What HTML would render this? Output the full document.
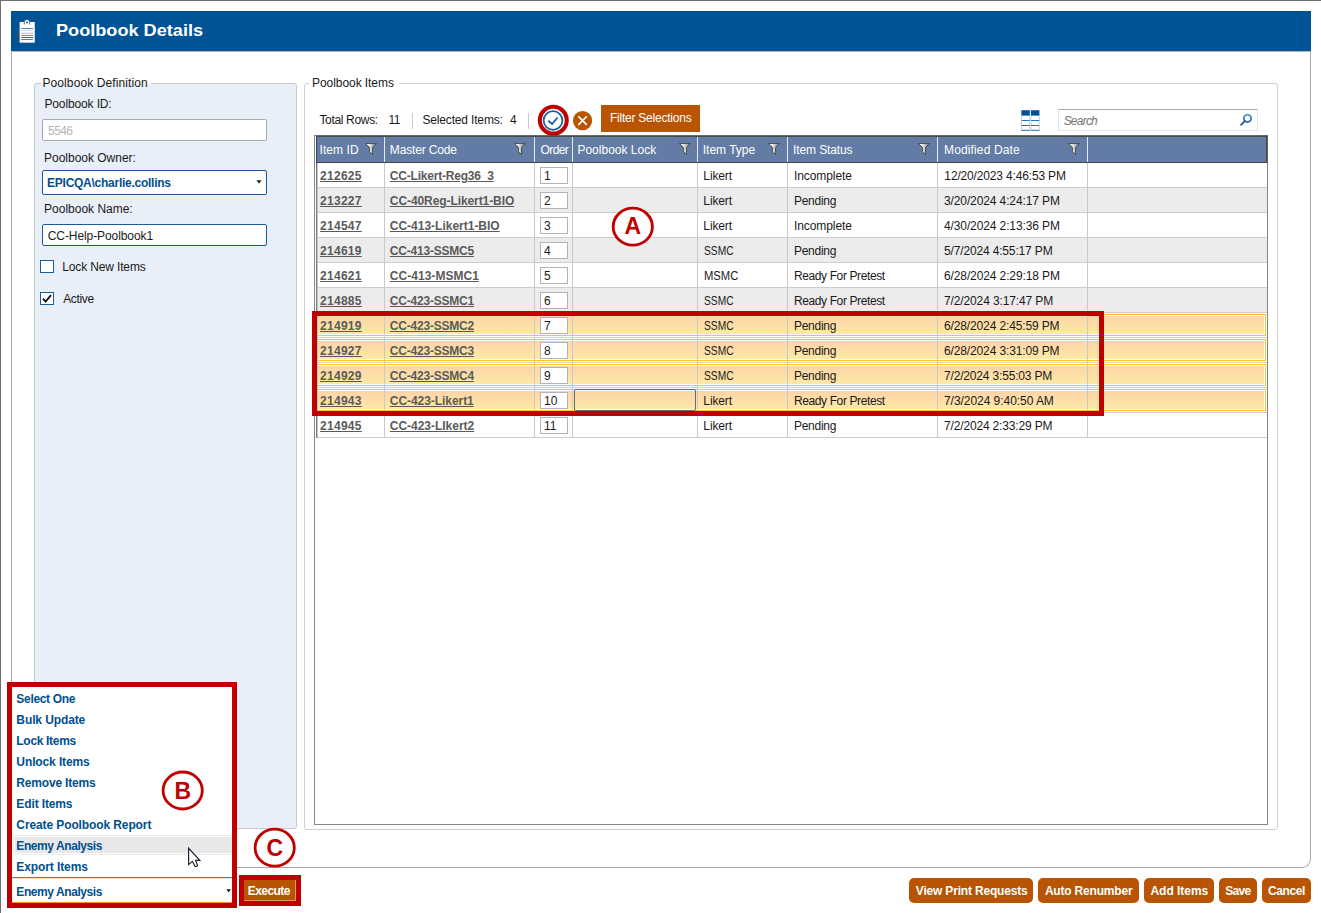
<!DOCTYPE html><html><head><meta charset="utf-8"><title>Poolbook Details</title><style>
*{box-sizing:border-box;margin:0;padding:0}
html,body{width:1321px;height:913px;overflow:hidden;background:#fff}
body{position:relative;font-family:"Liberation Sans",sans-serif;font-size:12px;color:#1a1a1a;line-height:14px}
.a{position:absolute}
.t{position:absolute;white-space:nowrap;line-height:14px;height:14px}
.b{font-weight:bold}
.hdr{position:absolute;left:11px;top:11px;width:1300px;height:40px;background:#005496}
.title{position:absolute;color:#fff;font-weight:bold;font-size:16.5px;line-height:22px;white-space:nowrap}
.panel{position:absolute;left:11px;top:51px;width:1300px;height:817px;border:1px solid #a8a8a8;border-top:none;border-radius:0 0 9px 9px}
.gb1{position:absolute;left:34px;top:83px;width:263px;height:746px;border:1px solid #c9c9c9;border-radius:3px;background:#e9eff8}
.gb2{position:absolute;left:304px;top:83px;width:974px;height:747px;border:1px solid #d0d0d0;border-radius:3px;background:#fff}
.lg{position:absolute;height:1px;top:83px}
.inp{position:absolute;background:#fff;border:1px solid #1b5a9e;border-radius:2px}
.grid{position:absolute;left:314px;top:135px;width:954px;height:690px;border:1px solid #868686;background:#fff}
.gh{position:absolute;left:316px;top:136px;width:951px;height:27px;background:#627ca5;border-top:1px solid #4a4a4a;border-bottom:1px solid #444;border-left:1px solid #3c4656;border-right:1px solid #4a4a4a}
.ht{position:absolute;color:#fff;white-space:nowrap;line-height:14px}
.hs{position:absolute;top:137px;width:1px;height:25px;background:#e6e9f2}
.row{position:absolute;left:316px;width:951px;height:25px;border-bottom:1px solid #cdcdcd}
.row.alt{background:#ececec}
.row.selrow{border-bottom-color:#cfcfd9}
.sel{position:absolute;left:-2px;right:1px;top:1px;height:22px;border:1px solid #ffc423;background:#fff}
.sel i{position:absolute;left:1px;right:1px;top:1px;bottom:1px;background:linear-gradient(#fed4a8,#fde9a6)}
.cs{position:absolute;width:1px;background:#c9c9c9}
.lk{position:absolute;white-space:nowrap;font-weight:bold;color:#5a5a5a;text-decoration:underline;line-height:14px}
.c{position:absolute;white-space:nowrap;line-height:14px;color:#1a1a1a}
.oi{position:absolute;left:540px;width:28px;height:17px;background:#fff;border:1px solid #aeb3bd}
.red{position:absolute;border:5px solid #c00000}
.dd{position:absolute;left:12px;top:687px;width:220px;height:191px;background:#fff}
.di{position:absolute;white-space:nowrap;font-weight:bold;color:#004f8f;line-height:14px}
.btn{position:absolute;top:878px;height:25px;background:#b85402;border-radius:5px}
.bt{position:absolute;color:#fff;font-weight:bold;white-space:nowrap;line-height:14px}
</style></head><body>
<div class="a" style="left:0;top:0;width:1321px;height:1px;background:#707070"></div>
<div class="a" style="left:0;top:0;width:1px;height:913px;background:#707070"></div>
<div class="panel"></div>
<div class="hdr"></div>
<div class="a" style="left:11px;top:51px;width:1300px;height:1px;background:#b4b4b4"></div>
<svg class="a" style="left:18px;top:18px" width="20" height="27" viewBox="18 18 20 27">
<rect x="19.3" y="21.8" width="15.8" height="21.3" fill="#6a7f9c" opacity="0.55"/>
<rect x="19.7" y="22" width="15" height="20.6" fill="#fff"/>
<path d="M24.3 24.6V22.2a2.7 2.7 0 0 1 5.4 0V24.6" fill="#fff" stroke="#3f5677" stroke-width="0.9"/>
<path d="M26 24.3V22.6a1 1 0 0 1 2 0V24.3" fill="#005496" stroke="none"/>
<rect x="24.8" y="23.2" width="4.4" height="1.8" fill="#fff"/>
<g stroke-width="1">
<path d="M21.2 28.5h11.8" stroke="#4a82b4"/><path d="M21.2 30.5h11.8" stroke="#c8d8e8"/>
<path d="M21.2 33.2h11.8" stroke="#a9c3da"/><path d="M21.2 35.4h11.8" stroke="#5c8fbd"/>
<path d="M21.2 37.5h11.8" stroke="#2e6da6"/><path d="M21.2 39.5h11.8" stroke="#4a82b4"/></g>
</svg>
<div id="title" class="title" style="left:55.82px;top:19.2px;transform:scaleX(1.0986);transform-origin:0 0;">Poolbook Details</div>
<div class="gb1"></div><div class="gb2"></div>
<div class="lg" style="left:41px;width:110px;background:#f4f7fb"></div>
<div class="lg" style="left:309px;width:90px;background:#fff"></div>
<div id="PoolDef" class="t" style="left:42.45px;top:76px;letter-spacing:0.1px;">Poolbook Definition</div>
<div id="PoolItems" class="t" style="left:312.09px;top:76px;letter-spacing:-0.069px;">Poolbook Items</div>
<div id="PoolID" class="t" style="left:44.45px;top:97px;letter-spacing:-0.131px;">Poolbook ID:</div>
<div class="inp" style="left:42px;top:119px;width:225px;height:22px;border-color:#a9a9a9"></div>
<div id="5546" class="t" style="left:48.09px;top:124px;letter-spacing:-0.6px;color:#b4b4b4">5546</div>
<div id="Owner" class="t" style="left:44.09px;top:151px;letter-spacing:-0.019px;">Poolbook Owner:</div>
<div class="inp" style="left:42px;top:170px;width:225px;height:25px"></div>
<div id="EPICQA" class="t b" style="left:47.09px;top:176px;letter-spacing:-0.261px;color:#004f8f">EPICQA\charlie.collins</div>
<svg class="a" style="left:256px;top:180px" width="6" height="4"><path d="M0.3 0.3h5.4L3 3.6z" fill="#222"/></svg>
<div id="Name" class="t" style="left:44.09px;top:202px;letter-spacing:-0.007px;">Poolbook Name:</div>
<div class="inp" style="left:42px;top:224px;width:225px;height:22px"></div>
<div id="CCHelp" class="t" style="left:47.81px;top:229px;letter-spacing:-0.09px;">CC-Help-Poolbook1</div>
<div class="a" style="left:40px;top:260px;width:14px;height:13px;background:#fff;border:1px solid #1b5a9e"></div>
<div id="LockNew" class="t" style="left:62.27px;top:260px;letter-spacing:-0.145px;">Lock New Items</div>
<div class="a" style="left:40px;top:292px;width:14px;height:13px;background:#fff;border:1px solid #1b5a9e"></div>
<svg class="a" style="left:40px;top:292px" width="14" height="13"><path d="M3 6.6L5.6 9.6L11 3.2" fill="none" stroke="#111" stroke-width="1.9"/></svg>
<div id="Active" class="t" style="left:63.17px;top:292px;letter-spacing:-0.342px;">Active</div>
<div id="TotalRows" class="t" style="left:319.45px;top:113px;letter-spacing:-0.333px;">Total Rows:</div>
<div id="n11" class="t" style="left:388.4px;top:113px;letter-spacing:-0.35px;">11</div>
<div class="a" style="left:412px;top:113px;width:1px;height:16px;background:#c8c8d8"></div>
<div id="SelItems" class="t" style="left:422.45px;top:113px;letter-spacing:-0.161px;">Selected Items:</div>
<div id="n4" class="t" style="left:510.0px;top:113px;letter-spacing:-0.9px;">4</div>
<div class="a" style="left:528px;top:113px;width:1px;height:16px;background:#c8c8d8"></div>
<svg class="a" style="left:536px;top:103px;z-index:5" width="60" height="34" viewBox="536 103 60 34">
<circle cx="553" cy="120.45" r="9.35" fill="#fff" stroke="#1560a4" stroke-width="1.8"/>
<path d="M548.3 120.8l3.8 3.2l5.5-6.5" fill="none" stroke="#1560a4" stroke-width="1.9"/>
<circle cx="553.3" cy="120.2" r="13.45" fill="none" stroke="#c00000" stroke-width="4.1"/>
<circle cx="582.55" cy="120.65" r="9.6" fill="#b85402"/>
<path d="M578.3 116.4l8.5 8.5M586.8 116.4l-8.5 8.5" stroke="#fff" stroke-width="1.6"/>
</svg>
<div class="a" style="left:601px;top:105px;width:99px;height:26.7px;background:#b85402"></div>
<div id="Filter" class="t" style="left:609.9px;top:111px;letter-spacing:-0.225px;color:#fff">Filter Selections</div>
<svg class="a" style="left:1021px;top:110px" width="19" height="21" viewBox="0 0 19 21">
<rect x="0.5" y="0.5" width="8.3" height="20" fill="#fff" stroke="#c5d9ec" stroke-width="1"/>
<rect x="10" y="0.5" width="8.3" height="20" fill="#fff" stroke="#c5d9ec" stroke-width="1"/>
<rect x="0.5" y="0.3" width="8.3" height="5.3" fill="#00529b"/>
<rect x="10" y="0.3" width="8.3" height="5.3" fill="#00529b"/>
<path d="M0.5 10.5h8.3M10 10.5h8.3M0.5 15.5h8.3M10 15.5h8.3M0.5 20.3h8.3M10 20.3h8.3" stroke="#2e74b5" stroke-width="1"/>
</svg>
<div class="a" style="left:1058px;top:109px;width:200px;height:22px;background:#fff;border:1px solid #dfe5ee;border-top-color:#a9a9b0"></div>
<div id="Search" class="t" style="left:1063.63px;top:114px;letter-spacing:-0.774px;font-style:italic;color:#747474">Search</div>
<svg class="a" style="left:1238px;top:112px" width="16" height="16" viewBox="0 0 16 16">
<defs><linearGradient id="mg" x1="0" x2="0" y1="0" y2="1"><stop offset="0" stop-color="#58a6d8"/><stop offset="1" stop-color="#3b62b4"/></linearGradient></defs>
<circle cx="9.5" cy="6.3" r="3.65" fill="none" stroke="url(#mg)" stroke-width="2"/>
<path d="M6.7 9.2L3.1 12.8" stroke="#2d569e" stroke-width="1.9" stroke-linecap="round"/></svg>
<div class="grid"></div>
<div class="gh"></div>
<div class="a" style="left:316px;top:135px;width:952px;height:1px;background:#6a6a6a"></div>
<div class="a" style="left:1267px;top:135px;width:1px;height:28px;background:#5e5e5e"></div>
<div class="hs" style="left:384px"></div>
<div class="hs" style="left:534px"></div>
<div class="hs" style="left:572px"></div>
<div class="hs" style="left:697px"></div>
<div class="hs" style="left:787px"></div>
<div class="hs" style="left:937px"></div>
<div class="hs" style="left:1087px"></div>
<div id="hItemID" class="ht" style="left:319.55px;top:143px;letter-spacing:0.075px;">Item ID</div>
<div id="hMaster" class="ht" style="left:389.82px;top:143px;letter-spacing:-0.162px;">Master Code</div>
<div id="hOrder" class="ht" style="left:540.45px;top:143px;letter-spacing:-0.562px;">Order</div>
<div id="hLock" class="ht" style="left:577.45px;top:143px;">Poolbook Lock</div>
<div id="hType" class="ht" style="left:702.74px;top:143px;letter-spacing:-0.011px;">Item Type</div>
<div id="hStatus" class="ht" style="left:793.1px;top:143px;letter-spacing:-0.126px;">Item Status</div>
<div id="hDate" class="ht" style="left:944.0px;top:143px;letter-spacing:0.143px;">Modified Date</div>
<svg class="a" style="left:365px;top:143px" width="13" height="13" viewBox="0 0 13 13">
<defs><linearGradient id="fg0" x1="0" x2="1" y1="0" y2="0"><stop offset="0.15" stop-color="#fff"/><stop offset="0.5" stop-color="#d4d4d4"/><stop offset="0.85" stop-color="#888"/></linearGradient></defs>
<path d="M0.4 0.45H11.5L7.6 4.3V11.6L4.4 8.6V4.3Z" fill="url(#fg0)" stroke="#4f4f4f" stroke-width="1" stroke-linejoin="round"/></svg>
<svg class="a" style="left:514px;top:143px" width="13" height="13" viewBox="0 0 13 13">
<defs><linearGradient id="fg1" x1="0" x2="1" y1="0" y2="0"><stop offset="0.15" stop-color="#fff"/><stop offset="0.5" stop-color="#d4d4d4"/><stop offset="0.85" stop-color="#888"/></linearGradient></defs>
<path d="M0.4 0.45H11.5L7.6 4.3V11.6L4.4 8.6V4.3Z" fill="url(#fg1)" stroke="#4f4f4f" stroke-width="1" stroke-linejoin="round"/></svg>
<svg class="a" style="left:679px;top:143px" width="13" height="13" viewBox="0 0 13 13">
<defs><linearGradient id="fg2" x1="0" x2="1" y1="0" y2="0"><stop offset="0.15" stop-color="#fff"/><stop offset="0.5" stop-color="#d4d4d4"/><stop offset="0.85" stop-color="#888"/></linearGradient></defs>
<path d="M0.4 0.45H11.5L7.6 4.3V11.6L4.4 8.6V4.3Z" fill="url(#fg2)" stroke="#4f4f4f" stroke-width="1" stroke-linejoin="round"/></svg>
<svg class="a" style="left:768px;top:143px" width="13" height="13" viewBox="0 0 13 13">
<defs><linearGradient id="fg3" x1="0" x2="1" y1="0" y2="0"><stop offset="0.15" stop-color="#fff"/><stop offset="0.5" stop-color="#d4d4d4"/><stop offset="0.85" stop-color="#888"/></linearGradient></defs>
<path d="M0.4 0.45H11.5L7.6 4.3V11.6L4.4 8.6V4.3Z" fill="url(#fg3)" stroke="#4f4f4f" stroke-width="1" stroke-linejoin="round"/></svg>
<svg class="a" style="left:918px;top:143px" width="13" height="13" viewBox="0 0 13 13">
<defs><linearGradient id="fg4" x1="0" x2="1" y1="0" y2="0"><stop offset="0.15" stop-color="#fff"/><stop offset="0.5" stop-color="#d4d4d4"/><stop offset="0.85" stop-color="#888"/></linearGradient></defs>
<path d="M0.4 0.45H11.5L7.6 4.3V11.6L4.4 8.6V4.3Z" fill="url(#fg4)" stroke="#4f4f4f" stroke-width="1" stroke-linejoin="round"/></svg>
<svg class="a" style="left:1068px;top:143px" width="13" height="13" viewBox="0 0 13 13">
<defs><linearGradient id="fg5" x1="0" x2="1" y1="0" y2="0"><stop offset="0.15" stop-color="#fff"/><stop offset="0.5" stop-color="#d4d4d4"/><stop offset="0.85" stop-color="#888"/></linearGradient></defs>
<path d="M0.4 0.45H11.5L7.6 4.3V11.6L4.4 8.6V4.3Z" fill="url(#fg5)" stroke="#4f4f4f" stroke-width="1" stroke-linejoin="round"/></svg>
<div class="row" style="top:163px">
</div>
<div class="cs" style="left:384px;top:163px;height:24px"></div>
<div class="cs" style="left:534px;top:163px;height:24px"></div>
<div class="cs" style="left:572px;top:163px;height:24px"></div>
<div class="cs" style="left:697px;top:163px;height:24px"></div>
<div class="cs" style="left:787px;top:163px;height:24px"></div>
<div class="cs" style="left:937px;top:163px;height:24px"></div>
<div class="cs" style="left:1087px;top:163px;height:24px"></div>
<div id="id0" class="lk" style="left:320.0px;top:169px;letter-spacing:0.292px;">212625</div>
<div id="code0" class="lk" style="left:389.81px;top:169px;letter-spacing:-0.204px;">CC-Likert-Reg36_3</div>
<div class="oi" style="top:167px"></div>
<div id="ord0" class="c" style="left:544px;top:169px;">1</div>
<div id="type0" class="c" style="left:703.37px;top:169px;letter-spacing:-0.126px;">Likert</div>
<div id="stat0" class="c" style="left:793.91px;top:169px;letter-spacing:-0.07px;">Incomplete</div>
<div id="date0" class="c" style="left:944.36px;top:169px;letter-spacing:-0.158px;">12/20/2023 4:46:53 PM</div>
<div class="row alt" style="top:188px">
</div>
<div class="cs" style="left:384px;top:188px;height:24px"></div>
<div class="cs" style="left:534px;top:188px;height:24px"></div>
<div class="cs" style="left:572px;top:188px;height:24px"></div>
<div class="cs" style="left:697px;top:188px;height:24px"></div>
<div class="cs" style="left:787px;top:188px;height:24px"></div>
<div class="cs" style="left:937px;top:188px;height:24px"></div>
<div class="cs" style="left:1087px;top:188px;height:24px"></div>
<div id="id1" class="lk" style="left:320.0px;top:194px;letter-spacing:0.292px;">213227</div>
<div id="code1" class="lk" style="left:389.81px;top:194px;letter-spacing:-0.081px;">CC-40Reg-Likert1-BIO</div>
<div class="oi" style="top:192px"></div>
<div id="ord1" class="c" style="left:544px;top:194px;">2</div>
<div id="type1" class="c" style="left:703.37px;top:194px;letter-spacing:-0.126px;">Likert</div>
<div id="stat1" class="c" style="left:793.91px;top:194px;letter-spacing:-0.255px;">Pending</div>
<div id="date1" class="c" style="left:944.0px;top:194px;letter-spacing:-0.114px;">3/20/2024 4:24:17 PM</div>
<div class="row" style="top:213px">
</div>
<div class="cs" style="left:384px;top:213px;height:24px"></div>
<div class="cs" style="left:534px;top:213px;height:24px"></div>
<div class="cs" style="left:572px;top:213px;height:24px"></div>
<div class="cs" style="left:697px;top:213px;height:24px"></div>
<div class="cs" style="left:787px;top:213px;height:24px"></div>
<div class="cs" style="left:937px;top:213px;height:24px"></div>
<div class="cs" style="left:1087px;top:213px;height:24px"></div>
<div id="id2" class="lk" style="left:320.0px;top:219px;letter-spacing:0.292px;">214547</div>
<div id="code2" class="lk" style="left:389.81px;top:219px;letter-spacing:-0.008px;">CC-413-Likert1-BIO</div>
<div class="oi" style="top:217px"></div>
<div id="ord2" class="c" style="left:544px;top:219px;">3</div>
<div id="type2" class="c" style="left:703.37px;top:219px;letter-spacing:-0.126px;">Likert</div>
<div id="stat2" class="c" style="left:793.91px;top:219px;letter-spacing:-0.07px;">Incomplete</div>
<div id="date2" class="c" style="left:944.0px;top:219px;letter-spacing:-0.114px;">4/30/2024 2:13:36 PM</div>
<div class="row alt" style="top:238px">
</div>
<div class="cs" style="left:384px;top:238px;height:24px"></div>
<div class="cs" style="left:534px;top:238px;height:24px"></div>
<div class="cs" style="left:572px;top:238px;height:24px"></div>
<div class="cs" style="left:697px;top:238px;height:24px"></div>
<div class="cs" style="left:787px;top:238px;height:24px"></div>
<div class="cs" style="left:937px;top:238px;height:24px"></div>
<div class="cs" style="left:1087px;top:238px;height:24px"></div>
<div id="id3" class="lk" style="left:320.0px;top:244px;letter-spacing:0.292px;">214619</div>
<div id="code3" class="lk" style="left:389.81px;top:244px;letter-spacing:-0.208px;">CC-413-SSMC5</div>
<div class="oi" style="top:242px"></div>
<div id="ord3" class="c" style="left:544px;top:244px;">4</div>
<div id="type3" class="c" style="left:704.27px;top:244px;transform:scaleX(0.8517);transform-origin:0 0;">SSMC</div>
<div id="stat3" class="c" style="left:793.91px;top:244px;letter-spacing:-0.255px;">Pending</div>
<div id="date3" class="c" style="left:944.0px;top:244px;letter-spacing:-0.155px;">5/7/2024 4:55:17 PM</div>
<div class="row" style="top:263px">
</div>
<div class="cs" style="left:384px;top:263px;height:24px"></div>
<div class="cs" style="left:534px;top:263px;height:24px"></div>
<div class="cs" style="left:572px;top:263px;height:24px"></div>
<div class="cs" style="left:697px;top:263px;height:24px"></div>
<div class="cs" style="left:787px;top:263px;height:24px"></div>
<div class="cs" style="left:937px;top:263px;height:24px"></div>
<div class="cs" style="left:1087px;top:263px;height:24px"></div>
<div id="id4" class="lk" style="left:320.0px;top:269px;letter-spacing:0.292px;">214621</div>
<div id="code4" class="lk" style="left:389.81px;top:269px;letter-spacing:0.035px;">CC-413-MSMC1</div>
<div class="oi" style="top:267px"></div>
<div id="ord4" class="c" style="left:544px;top:269px;">5</div>
<div id="type4" class="c" style="left:704.27px;top:269px;transform:scaleX(0.9352);transform-origin:0 0;">MSMC</div>
<div id="stat4" class="c" style="left:793.91px;top:269px;letter-spacing:-0.382px;">Ready For Pretest</div>
<div id="date4" class="c" style="left:944.0px;top:269px;letter-spacing:-0.114px;">6/28/2024 2:29:18 PM</div>
<div class="row alt" style="top:288px">
</div>
<div class="cs" style="left:384px;top:288px;height:24px"></div>
<div class="cs" style="left:534px;top:288px;height:24px"></div>
<div class="cs" style="left:572px;top:288px;height:24px"></div>
<div class="cs" style="left:697px;top:288px;height:24px"></div>
<div class="cs" style="left:787px;top:288px;height:24px"></div>
<div class="cs" style="left:937px;top:288px;height:24px"></div>
<div class="cs" style="left:1087px;top:288px;height:24px"></div>
<div id="id5" class="lk" style="left:320.0px;top:294px;letter-spacing:0.292px;">214885</div>
<div id="code5" class="lk" style="left:389.81px;top:294px;letter-spacing:-0.208px;">CC-423-SSMC1</div>
<div class="oi" style="top:292px"></div>
<div id="ord5" class="c" style="left:544px;top:294px;">6</div>
<div id="type5" class="c" style="left:704.27px;top:294px;transform:scaleX(0.8517);transform-origin:0 0;">SSMC</div>
<div id="stat5" class="c" style="left:793.91px;top:294px;letter-spacing:-0.382px;">Ready For Pretest</div>
<div id="date5" class="c" style="left:944.0px;top:294px;letter-spacing:-0.125px;">7/2/2024 3:17:47 PM</div>
<div class="row selrow" style="top:313px">
<div class="sel"><i></i></div>
</div>
<div class="cs" style="left:384px;top:313px;height:24px"></div>
<div class="cs" style="left:534px;top:313px;height:24px"></div>
<div class="cs" style="left:572px;top:313px;height:24px"></div>
<div class="cs" style="left:697px;top:313px;height:24px"></div>
<div class="cs" style="left:787px;top:313px;height:24px"></div>
<div class="cs" style="left:937px;top:313px;height:24px"></div>
<div class="cs" style="left:1087px;top:313px;height:24px"></div>
<div id="id6" class="lk" style="left:320.0px;top:319px;letter-spacing:0.292px;">214919</div>
<div id="code6" class="lk" style="left:389.81px;top:319px;letter-spacing:-0.208px;">CC-423-SSMC2</div>
<div class="oi" style="top:317px"></div>
<div id="ord6" class="c" style="left:544px;top:319px;">7</div>
<div id="type6" class="c" style="left:704.27px;top:319px;transform:scaleX(0.8517);transform-origin:0 0;">SSMC</div>
<div id="stat6" class="c" style="left:793.91px;top:319px;letter-spacing:-0.255px;">Pending</div>
<div id="date6" class="c" style="left:944.0px;top:319px;letter-spacing:-0.133px;">6/28/2024 2:45:59 PM</div>
<div class="row selrow" style="top:338px">
<div class="sel"><i></i></div>
</div>
<div class="cs" style="left:384px;top:338px;height:24px"></div>
<div class="cs" style="left:534px;top:338px;height:24px"></div>
<div class="cs" style="left:572px;top:338px;height:24px"></div>
<div class="cs" style="left:697px;top:338px;height:24px"></div>
<div class="cs" style="left:787px;top:338px;height:24px"></div>
<div class="cs" style="left:937px;top:338px;height:24px"></div>
<div class="cs" style="left:1087px;top:338px;height:24px"></div>
<div id="id7" class="lk" style="left:320.0px;top:344px;letter-spacing:0.292px;">214927</div>
<div id="code7" class="lk" style="left:389.81px;top:344px;letter-spacing:-0.208px;">CC-423-SSMC3</div>
<div class="oi" style="top:342px"></div>
<div id="ord7" class="c" style="left:544px;top:344px;">8</div>
<div id="type7" class="c" style="left:704.27px;top:344px;transform:scaleX(0.8517);transform-origin:0 0;">SSMC</div>
<div id="stat7" class="c" style="left:793.91px;top:344px;letter-spacing:-0.255px;">Pending</div>
<div id="date7" class="c" style="left:944.0px;top:344px;letter-spacing:-0.133px;">6/28/2024 3:31:09 PM</div>
<div class="row selrow" style="top:363px">
<div class="sel"><i></i></div>
</div>
<div class="cs" style="left:384px;top:363px;height:24px"></div>
<div class="cs" style="left:534px;top:363px;height:24px"></div>
<div class="cs" style="left:572px;top:363px;height:24px"></div>
<div class="cs" style="left:697px;top:363px;height:24px"></div>
<div class="cs" style="left:787px;top:363px;height:24px"></div>
<div class="cs" style="left:937px;top:363px;height:24px"></div>
<div class="cs" style="left:1087px;top:363px;height:24px"></div>
<div id="id8" class="lk" style="left:320.0px;top:369px;letter-spacing:0.292px;">214929</div>
<div id="code8" class="lk" style="left:389.81px;top:369px;letter-spacing:-0.208px;">CC-423-SSMC4</div>
<div class="oi" style="top:367px"></div>
<div id="ord8" class="c" style="left:544px;top:369px;">9</div>
<div id="type8" class="c" style="left:704.27px;top:369px;transform:scaleX(0.8517);transform-origin:0 0;">SSMC</div>
<div id="stat8" class="c" style="left:793.91px;top:369px;letter-spacing:-0.255px;">Pending</div>
<div id="date8" class="c" style="left:944.0px;top:369px;letter-spacing:-0.175px;">7/2/2024 3:55:03 PM</div>
<div class="row selrow" style="top:388px">
<div class="sel"><i></i></div>
</div>
<div class="cs" style="left:384px;top:388px;height:24px"></div>
<div class="cs" style="left:534px;top:388px;height:24px"></div>
<div class="cs" style="left:572px;top:388px;height:24px"></div>
<div class="cs" style="left:697px;top:388px;height:24px"></div>
<div class="cs" style="left:787px;top:388px;height:24px"></div>
<div class="cs" style="left:937px;top:388px;height:24px"></div>
<div class="cs" style="left:1087px;top:388px;height:24px"></div>
<div id="id9" class="lk" style="left:320.0px;top:394px;letter-spacing:0.292px;">214943</div>
<div id="code9" class="lk" style="left:389.81px;top:394px;letter-spacing:-0.057px;">CC-423-Likert1</div>
<div class="oi" style="top:392px"></div>
<div id="ord9" class="c" style="left:544px;top:394px;">10</div>
<div id="type9" class="c" style="left:703.37px;top:394px;letter-spacing:-0.126px;">Likert</div>
<div id="stat9" class="c" style="left:793.91px;top:394px;letter-spacing:-0.382px;">Ready For Pretest</div>
<div id="date9" class="c" style="left:944.0px;top:394px;letter-spacing:-0.05px;">7/3/2024 9:40:50 AM</div>
<div class="row" style="top:413px">
</div>
<div class="cs" style="left:384px;top:413px;height:24px"></div>
<div class="cs" style="left:534px;top:413px;height:24px"></div>
<div class="cs" style="left:572px;top:413px;height:24px"></div>
<div class="cs" style="left:697px;top:413px;height:24px"></div>
<div class="cs" style="left:787px;top:413px;height:24px"></div>
<div class="cs" style="left:937px;top:413px;height:24px"></div>
<div class="cs" style="left:1087px;top:413px;height:24px"></div>
<div id="id10" class="lk" style="left:320.0px;top:419px;letter-spacing:0.292px;">214945</div>
<div id="code10" class="lk" style="left:389.81px;top:419px;letter-spacing:-0.022px;">CC-423-LIkert2</div>
<div class="oi" style="top:417px"></div>
<div id="ord10" class="c" style="left:544px;top:419px;">11</div>
<div id="type10" class="c" style="left:703.37px;top:419px;letter-spacing:-0.126px;">Likert</div>
<div id="stat10" class="c" style="left:793.91px;top:419px;letter-spacing:-0.255px;">Pending</div>
<div id="date10" class="c" style="left:944.0px;top:419px;letter-spacing:-0.16px;">7/2/2024 2:33:29 PM</div>
<div class="a" style="left:316px;top:163px;width:1px;height:275px;background:#7c7c7c"></div>
<div class="a" style="left:317px;top:163px;width:1px;height:275px;background:#c4c4c4"></div>
<div class="a" style="left:574px;top:389px;width:122px;height:22px;border:1px solid #6a6a6a;border-radius:2px"></div>
<div class="red" style="left:312px;top:311px;width:792px;height:105px"></div>
<svg class="a" style="left:608px;top:203px" width="48" height="46" viewBox="0 0 48 46"><ellipse cx="24.8" cy="23.7" rx="19.6" ry="18.5" fill="#fff" stroke="#c00000" stroke-width="2.8"/><text x="24.8" y="30.9" text-anchor="middle" font-family="Liberation Sans, sans-serif" font-weight="bold" font-size="23px" fill="#c00000">A</text></svg>
<div class="btn" style="left:909px;width:124px"></div>
<div id="bView" class="bt" style="left:915.8px;top:884px;letter-spacing:-0.18px;">View Print Requests</div>
<div class="btn" style="left:1038px;width:101px"></div>
<div id="bAuto" class="bt" style="left:1044.89px;top:884px;letter-spacing:-0.188px;">Auto Renumber</div>
<div class="btn" style="left:1144px;width:70px"></div>
<div id="bAdd" class="bt" style="left:1150.45px;top:884px;letter-spacing:-0.022px;">Add Items</div>
<div class="btn" style="left:1219px;width:38px"></div>
<div id="bSave" class="bt" style="left:1225.17px;top:884px;letter-spacing:-0.63px;">Save</div>
<div class="btn" style="left:1262px;width:49px"></div>
<div id="bCancel" class="bt" style="left:1267.9px;top:884px;letter-spacing:-0.36px;">Cancel</div>
<div class="dd"></div>
<div class="a" style="left:13px;top:835px;width:221px;height:20px;border:1px solid #ececec;background:#fcfcfc"></div>
<div class="a" style="left:15px;top:837px;width:217px;height:16px;background:#e8e8e8"></div>
<div id="dd0" class="di" style="left:16.36px;top:692px;letter-spacing:-0.32px;">Select One</div>
<div id="dd1" class="di" style="left:16.36px;top:713px;letter-spacing:-0.108px;">Bulk Update</div>
<div id="dd2" class="di" style="left:16.36px;top:734px;letter-spacing:-0.32px;">Lock Items</div>
<div id="dd3" class="di" style="left:16.36px;top:755px;letter-spacing:-0.115px;">Unlock Items</div>
<div id="dd4" class="di" style="left:16.36px;top:776px;letter-spacing:-0.196px;">Remove Items</div>
<div id="dd5" class="di" style="left:16.36px;top:797px;letter-spacing:-0.13px;">Edit Items</div>
<div id="dd6" class="di" style="left:16.36px;top:818px;letter-spacing:-0.111px;">Create Poolbook Report</div>
<div id="dd7" class="di" style="left:16.36px;top:839px;letter-spacing:-0.429px;">Enemy Analysis</div>
<div id="dd8" class="di" style="left:16.36px;top:860px;letter-spacing:-0.106px;">Export Items</div>
<div class="a" style="left:12px;top:877px;width:220px;height:26px;background:#fff;border-top:1px solid #3d8ad3;border-bottom:1px solid #ff8a1e"></div>
<div class="a" style="left:12px;top:878px;width:220px;height:1px;background:#ffd9b5"></div>
<div id="combo" class="di" style="left:16.36px;top:884.5px;letter-spacing:-0.429px;">Enemy Analysis</div>
<svg class="a" style="left:226px;top:889px" width="6" height="4"><path d="M0.3 0.3h4.6L2.6 3.4z" fill="#111"/></svg>
<div class="red" style="left:7px;top:682px;width:230px;height:226px"></div>
<svg class="a" style="left:158px;top:767px" width="48" height="46" viewBox="0 0 48 46"><ellipse cx="24.7" cy="23.5" rx="19.6" ry="18.5" fill="#fff" stroke="#c00000" stroke-width="2.8"/><text x="24.7" y="31.7" text-anchor="middle" font-family="Liberation Sans, sans-serif" font-weight="bold" font-size="23px" fill="#c00000">B</text></svg>
<svg class="a" style="left:186px;top:846px" width="16" height="23" viewBox="186 846 16 23">
<path d="M188.6 848.3V864.6L192.4 861.3L194.9 866.3Q196.2 867 197.5 865.6L195.6 860.4H199.9Z" fill="#fff" stroke="#161a2a" stroke-width="1.15" stroke-linejoin="miter"/></svg>
<div class="a" style="left:244px;top:880px;width:52px;height:21px;background:#b85402;border-right:1px solid #d89a5e;border-bottom:1px solid #d89a5e"></div>
<div id="bExec" class="bt" style="left:247.72px;top:884px;letter-spacing:-0.555px;">Execute</div>
<div class="red" style="left:239px;top:875px;width:62px;height:31px"></div>
<svg class="a" style="left:250px;top:824px" width="48" height="46" viewBox="0 0 48 46"><ellipse cx="24.7" cy="23.7" rx="19.6" ry="18.5" fill="#fff" stroke="#c00000" stroke-width="2.8"/><text x="24.7" y="31.9" text-anchor="middle" font-family="Liberation Sans, sans-serif" font-weight="bold" font-size="23px" fill="#c00000">C</text></svg>
</body></html>
